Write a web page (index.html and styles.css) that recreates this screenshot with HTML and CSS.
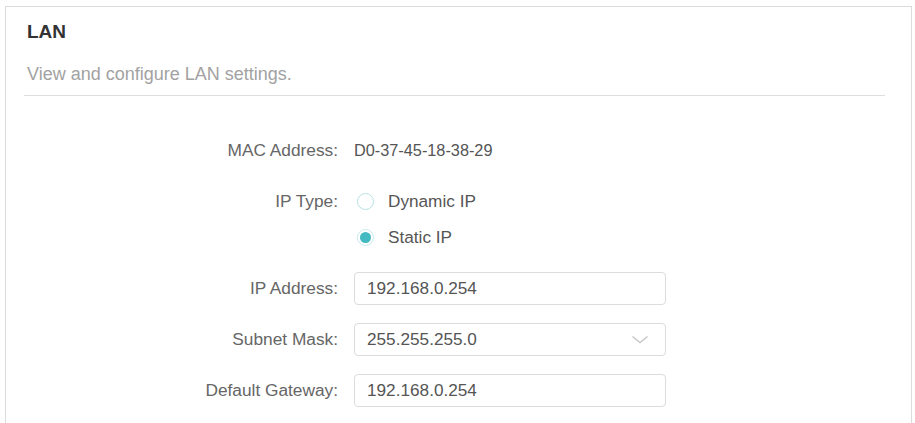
FILE: index.html
```
<!DOCTYPE html>
<html>
<head>
<meta charset="utf-8">
<title>LAN</title>
<link rel="stylesheet" href="styles.css">
</head>
<body>
<div class="panel">
  <div class="panel-head">
    <h2 class="panel-title">LAN</h2>
    <p class="panel-desc">View and configure LAN settings.</p>
  </div>
  <div class="lan-form">
    <div class="form-row">
      <label class="form-label">MAC Address:</label>
      <div class="form-field"><span class="form-text">D0-37-45-18-38-29</span></div>
    </div>
    <div class="form-row form-row-radio">
      <label class="form-label">IP Type:</label>
      <div class="form-field radio-group">
        <div class="radio-item">
          <span class="radio"></span>
          <span class="radio-text">Dynamic IP</span>
        </div>
        <div class="radio-item">
          <span class="radio checked"></span>
          <span class="radio-text">Static IP</span>
        </div>
      </div>
    </div>
    <div class="form-row">
      <label class="form-label">IP Address:</label>
      <div class="form-field"><div class="text-box">192.168.0.254</div></div>
    </div>
    <div class="form-row">
      <label class="form-label">Subnet Mask:</label>
      <div class="form-field">
        <div class="text-box select-box">
          <span>255.255.255.0</span>
          <svg class="chevron" width="18" height="9" viewBox="0 0 18 9"><polyline points="1.5,1.5 9,7.5 16.5,1.5" fill="none" stroke="#c8c8c8" stroke-width="1.6"/></svg>
        </div>
      </div>
    </div>
    <div class="form-row">
      <label class="form-label">Default Gateway:</label>
      <div class="form-field"><div class="text-box">192.168.0.254</div></div>
    </div>
  </div>
</div>
</body>
</html>
```

FILE: styles.css
```
html, body {
    margin: 0;
    padding: 0;
    background: #fff;
}
body {
    font-family: "Liberation Sans", Arial, sans-serif;
    color: #5f5f5f;
    overflow: hidden;
}
.panel {
    margin: 6px 3px 0 5px;
    border: 1px solid #dcdcdc;
    border-bottom: none;
    height: 460px;
}
.panel-head {
    padding: 14px 26px 0 18px;
}
.panel-title {
    margin: 0;
    padding-left: 3px;
    font-size: 19px;
    line-height: 22px;
    font-weight: bold;
    color: #333;
}
.panel-desc {
    margin: 20px 0 0 0;
    padding: 0 0 10px 3px;
    font-size: 18px;
    line-height: 22px;
    color: #a2a2a2;
    border-bottom: 1px solid #dedede;
}

.lan-form {
    display: flex;
    flex-direction: column;
    gap: 18px;
    padding-top: 38px;
}
.form-row {
    display: flex;
    align-items: flex-start;
}
.form-label {
    width: 332px;
    flex: none;
    text-align: right;
    font-size: 17.3px;
    line-height: 33px;
    color: #666;
}
.form-field {
    margin-left: 16px;
    font-size: 17.2px;
    line-height: 33px;
    color: #555;
}
.form-text {
    display: block;
    font-size: 16.3px;
}

.radio-group {
    display: flex;
    flex-direction: column;
    gap: 3px;
}
.radio-item {
    display: flex;
    align-items: center;
    height: 33px;
    padding-left: 3px;
}
.radio {
    width: 15px;
    height: 15px;
    border-radius: 50%;
    border: 1.5px solid #b8e2e6;
    box-sizing: content-box;
    margin-right: 14px;
    position: relative;
}
.radio.checked {
    border-color: #c6ecef;
}
.radio.checked::after {
    content: "";
    position: absolute;
    left: 2px;
    top: 2px;
    width: 11px;
    height: 11px;
    border-radius: 50%;
    background: #43b9c2;
}

.text-box {
    width: 312px;
    height: 33px;
    box-sizing: border-box;
    border: 1px solid #dcdcdc;
    border-radius: 4px;
    padding: 0 12px;
    line-height: 31px;
    color: #555;
}
.select-box {
    display: flex;
    align-items: center;
    justify-content: space-between;
    padding-right: 16px;
}
.chevron {
    display: block;
}
```
